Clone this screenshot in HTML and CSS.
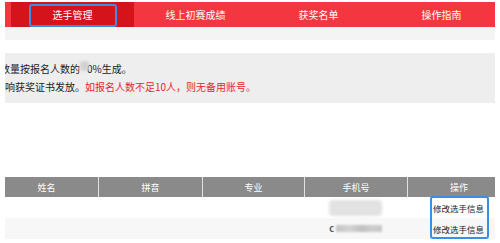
FILE: index.html
```html
<!DOCTYPE html>
<html lang="zh-CN">
<head>
  <meta charset="UTF-8" />
  <meta name="viewport" content="width=device-width, initial-scale=1.0" />
  <title>选手管理</title>
  <link rel="stylesheet" href="styles.css">
</head>
<body>

  <div class="page">

    <nav class="tabs">
      <a class="tab active" href="#">选手管理</a>
      <a class="tab" href="#">线上初赛成绩</a>
      <a class="tab" href="#">获奖名单</a>
      <a class="tab" href="#">操作指南</a>
    </nav>

    <div class="strip"></div>

    <div class="notice">
      <p class="line first">数量按报名人数的<span class="blur-num">1</span>0%生成。</p>
      <p class="line">响获奖证书发放。<span class="warn">如报名人数不足10人，则无备用账号。</span></p>
    </div>

    <div class="table-wrap">
      <div class="table">
        <div class="row head">
          <div class="cell">姓名</div>
          <div class="cell">拼音</div>
          <div class="cell">专业</div>
          <div class="cell">手机号</div>
          <div class="cell">操作</div>
        </div>
        <div class="row">
          <div class="cell"></div>
          <div class="cell"></div>
          <div class="cell"></div>
          <div class="cell"><span class="phone-blur big"></span></div>
          <div class="cell"><a class="edit" href="#">修改选手信息</a></div>
        </div>
        <div class="row alt">
          <div class="cell"></div>
          <div class="cell"></div>
          <div class="cell"></div>
          <div class="cell"><span class="phone-c">c</span><span class="phone-blur small"></span></div>
          <div class="cell"><a class="edit" href="#">修改选手信息</a></div>
        </div>
      </div>
      <div class="mark"></div>
    </div>

  </div>

</body>
</html>
```

FILE: styles.css
```css
html, body {
  margin: 0;
  padding: 0;
  background: #fff;
  font-family: "Noto Sans CJK SC", "Liberation Sans", sans-serif;
  color: #333;
}

.page {
  padding: 2px 5px 0;
}

/* top tabs */
.tabs {
  display: flex;
  height: 25px;
  padding-left: 6px;
  overflow: hidden;
  background: #f3363f;
}

.tab {
  position: relative;
  flex: 0 0 123px;
  line-height: 25px;
  text-align: center;
  font-size: 10px;
  color: #fff;
  text-decoration: none;
}

.tab.active {
  background: #d5131b;
}

.tab.active::after {
  content: "";
  position: absolute;
  left: 18px;
  right: 17px;
  top: 2px;
  bottom: 0;
  border: 2px solid #3a8ee8;
  border-radius: 3px;
}

.strip {
  height: 13px;
  background: #f4f4f4;
}

/* notice box */
.notice {
  margin-top: 13px;
  height: 50px;
  box-sizing: border-box;
  padding: 7px 0;
  background: #eeeeee;
  overflow: hidden;
  font-size: 10px;
  line-height: 18px;
  color: #222;
}

.line {
  margin: 0;
  white-space: nowrap;
}

.line.first {
  text-indent: -5px;
}

.blur-num {
  display: inline-block;
  width: 9px;
  height: 10px;
  margin-right: -2px;
  vertical-align: -1px;
  color: transparent;
  background: #d2d2d2;
  border-radius: 3px;
  filter: blur(1px);
  text-indent: 0;
  position: relative;
}

.warn {
  color: #e8262f;
}

/* table */
.table-wrap {
  position: relative;
  margin-top: 74px;
  overflow: hidden;
}

.table {
  margin-left: -10px;
  width: 515px;
}

.row {
  display: grid;
  grid-template-columns: 103px 104px 102px 103px 103px;
  height: 21px;
}

.row.head {
  height: 20px;
  background: #8a8a8a;
}

.row.alt {
  background: #f7f7f7;
}

.cell {
  display: flex;
  align-items: center;
  justify-content: center;
  font-size: 8.5px;
}

.head .cell {
  font-size: 9px;
  color: #fff;
}

.head .cell + .cell {
  border-left: 1px solid #e2e2e2;
}

.edit {
  color: #222;
  text-decoration: none;
}

.phone-blur {
  display: inline-block;
  border-radius: 4px;
  filter: blur(1.5px);
}

.phone-blur.big {
  width: 53px;
  height: 16px;
  background: #e2e2e2;
}

.phone-blur.small {
  width: 46px;
  height: 7px;
  margin-left: 2px;
  border-radius: 1px;
  filter: blur(0.8px);
  background: linear-gradient(90deg, #c4c4c4, #d4d4d4 30%, #c0c0c0 55%, #cdcdcd 80%, #c6c6c6);
}

.phone-c {
  font-size: 9px;
  font-weight: bold;
  color: #555;
}

.mark {
  position: absolute;
  left: 425px;
  top: 19px;
  width: 59px;
  height: 43px;
  box-sizing: border-box;
  border: 2px solid #3a8ee8;
  border-radius: 3px;
}
```
